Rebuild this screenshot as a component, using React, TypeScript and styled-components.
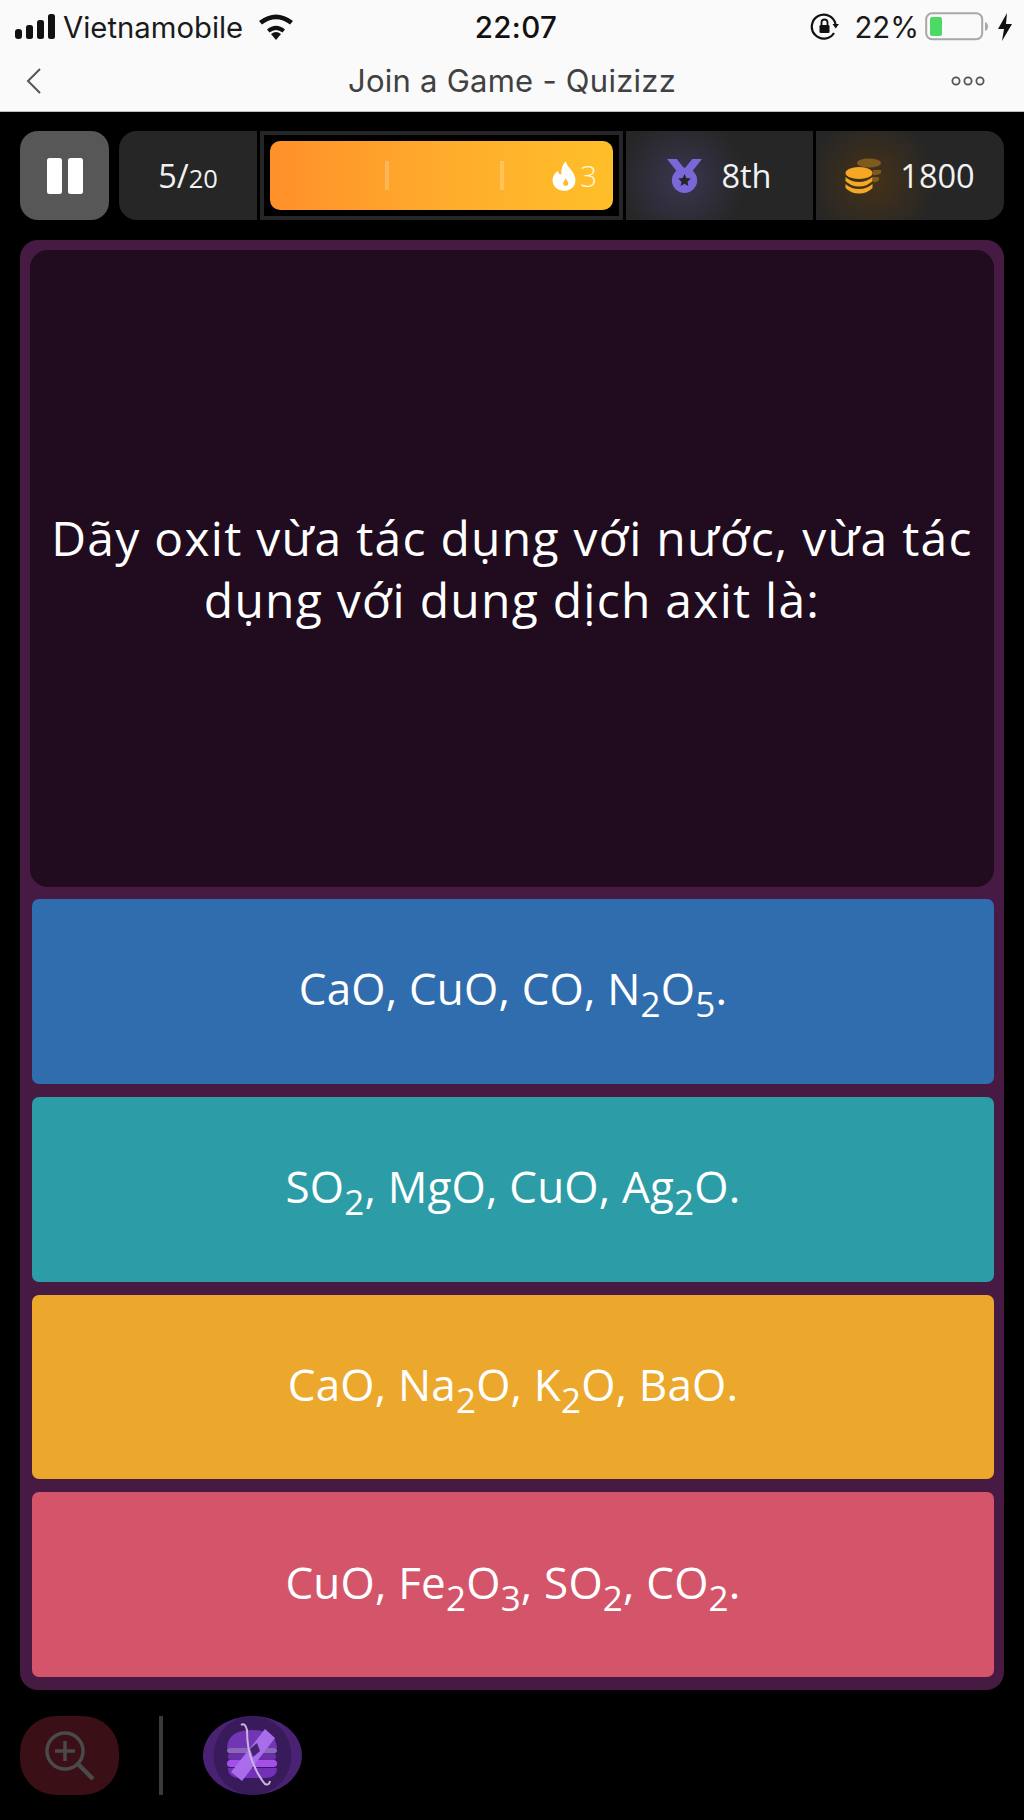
import React from "react";
import styled, { createGlobalStyle } from "styled-components";

const Global = createGlobalStyle`
  html, body { margin: 0; padding: 0; background: #000; }
  * { box-sizing: border-box; }
`;

const Page = styled.div`
  width: 1024px;
  height: 1820px;
  background: #000;
  display: flex;
  flex-direction: column;
  overflow: hidden;
`;

const Browser = styled.header`
  height: 112px;
  background: #fafafa;
  border-bottom: 1px solid #bdbdbd;
  font-family: Inter, "Liberation Sans", sans-serif;
  display: flex;
  flex-direction: column;
`;

const StatusBar = styled.div`
  height: 54px;
  padding: 0 11px 0 15px;
  display: grid;
  grid-template-columns: 1fr auto 1fr;
  align-items: center;
  color: #1a1a1a;
  font-size: 29.3px;
`;

const StatusLeft = styled.div`
  display: flex;
  align-items: center;
  gap: 6px;
`;

const Clock = styled.div`
  margin-left: 4px;
  font-weight: 500;
  font-size: 29.5px;
  letter-spacing: 0.4px;
  color: #111;
`;

const StatusRight = styled.div`
  display: flex;
  align-items: center;
  justify-content: flex-end;
  gap: 6px;
`;

const NavBar = styled.div`
  flex: 1;
  padding: 0 25px 4px;
  display: grid;
  grid-template-columns: 1fr auto 1fr;
  align-items: center;
  color: #414141;
  font-size: 31px;
  letter-spacing: 0.25px;
`;

const NavEnd = styled.div`
  margin-right: 13px;
  display: flex;
  justify-content: flex-end;
`;

const Game = styled.main`
  flex: 1;
  padding: 19px 20px 0;
  display: flex;
  flex-direction: column;
  font-family: "Open Sans", Lato, sans-serif;
`;

const TopBar = styled.div`
  height: 89px;
  display: flex;
  gap: 10px;
`;

const PauseButton = styled.div`
  width: 89px;
  border-radius: 18px;
  background: #575757;
  display: flex;
  align-items: center;
  justify-content: center;
`;

const Stats = styled.div`
  flex: 1;
  display: flex;
  gap: 3px;
  border-radius: 18px;
  overflow: hidden;
`;

const Stat = styled.div<{ $w: number; $glow?: string }>`
  width: ${(p) => p.$w}px;
  background: ${(p) =>
    p.$glow
      ? `radial-gradient(circle at 30% 55%, ${p.$glow} 0%, #262626 46%)`
      : "#262626"};
  display: flex;
  align-items: center;
  justify-content: center;
  gap: 19px;
  color: #f2f2f2;
  font-size: 32.5px;
`;

const Small = styled.small`
  font-size: 25.5px;
`;

const Track = styled.div`
  flex: 1;
  background: #262626;
  padding: 4px;
  display: flex;
`;

const TrackInner = styled.div`
  flex: 1;
  background: #000;
  padding: 6px;
  display: flex;
`;

const Fill = styled.div`
  flex: 1;
  position: relative;
  border-radius: 10px;
  background: linear-gradient(90deg, #ff902a 0%, #ffab2c 50%, #ffbf29 100%);
  display: flex;
  align-items: center;
  justify-content: flex-end;
  gap: 4px;
  padding-right: 16px;
  color: rgba(255, 255, 255, 0.85);
  font-size: 30px;
  font-weight: 300;
`;

const Tick = styled.span<{ $x: number }>`
  position: absolute;
  top: 20px;
  left: ${(p) => p.$x}px;
  width: 4px;
  height: 29px;
  background: rgba(255, 255, 255, 0.22);
`;

const Panel = styled.section`
  margin-top: 20px;
  height: 1450px;
  padding: 10px 10px 13px;
  border-radius: 18px;
  background: #461a42;
  display: flex;
  flex-direction: column;
`;

const Question = styled.div`
  height: 637px;
  margin-bottom: 12px;
  border-radius: 18px;
  background: #200c1e;
  color: #fff;
  display: flex;
  align-items: center;
  justify-content: center;
  text-align: center;
  font-size: 48px;
  letter-spacing: 1.25px;
  line-height: 62px;
  padding: 0 16px;
`;

const Options = styled.div`
  flex: 1;
  margin-left: 2px;
  display: flex;
  flex-direction: column;
  gap: 13px;
`;

const Option = styled.div<{ $bg: string }>`
  flex: 1;
  padding-bottom: 6px;
  border-radius: 7px;
  background: ${(p) => p.$bg};
  color: #fff;
  display: flex;
  align-items: center;
  justify-content: center;
  font-size: 44px;
  letter-spacing: 0.2px;
  line-height: 50px;
  sub {
    font-size: 35px;
    line-height: 0;
    vertical-align: -12px;
  }
`;

const Footer = styled.footer`
  margin-top: 26px;
  display: flex;
  align-items: center;
  height: 79px;
`;

const ZoomButton = styled.div`
  width: 99px;
  height: 79px;
  border-radius: 36px;
  background: #3a0f16;
  display: flex;
  align-items: center;
  justify-content: center;
`;

const Separator = styled.div`
  width: 4px;
  height: 79px;
  margin: 0 40px;
  background: #3a3a3a;
`;

const PowerUp = styled.div`
  width: 99px;
  height: 79px;
  border-radius: 50%;
  background: #4a2273;
  display: flex;
  align-items: center;
  justify-content: center;
`;

const Signal = () => (
  <svg width="42" height="26" viewBox="0 0 42 26">
    <rect x="0" y="15" width="7" height="10" rx="3" fill="#111" />
    <rect x="11" y="11" width="7" height="14" rx="2.5" fill="#111" />
    <rect x="22" y="6" width="7" height="19" rx="2.5" fill="#111" />
    <rect x="33" y="0" width="7" height="25" rx="2.5" fill="#111" />
  </svg>
);

const Wifi = () => (
  <svg width="36" height="26" viewBox="0 0 36 26" style={{ marginLeft: 9 }}>
    <path d="M18 26 L13 20 Q18 16 23 20 Z" fill="#111" />
    <path d="M9 15.5 Q18 8 27 15.5 L24.5 18.5 Q18 13.5 11.5 18.5 Z" fill="#111" />
    <path d="M1 7 Q18 -6 35 7 L32 10.5 Q18 0 4 10.5 Z" fill="#111" />
  </svg>
);

const RotationLock = () => (
  <svg width="30" height="30" viewBox="0 0 30 30" style={{ marginRight: 8 }}>
    <path d="M24 21 A12 12 0 1 1 25.5 12" fill="none" stroke="#111" strokeWidth="2.2" />
    <path d="M22.5 12 H29 L25.7 16.5 Z" fill="#111" />
    <rect x="9.5" y="13" width="10" height="8" rx="1.3" fill="#111" />
    <path d="M11.5 13 V10.5 A3 3 0 0 1 17.5 10.5 V13" fill="none" stroke="#111" strokeWidth="1.8" />
  </svg>
);

const Battery = () => (
  <svg width="66" height="30" viewBox="0 0 66 30">
    <rect x="1.2" y="1.2" width="56" height="26" rx="6" fill="none" stroke="#a8a8a8" strokeWidth="2" />
    <rect x="5" y="5" width="12" height="19" rx="2" fill="#4cd964" />
    <path d="M60 10 Q63 11 63 14.5 Q63 18 60 19 Z" fill="#a8a8a8" />
  </svg>
);

const Bolt = () => (
  <svg width="16" height="28" viewBox="0 0 16 28">
    <path d="M10 0 L1 16 H7 L5 28 L15 11 H9 Z" fill="#111" />
  </svg>
);

const Back = () => (
  <svg width="18" height="28" viewBox="0 0 18 28">
    <path d="M15 2 L3 14 L15 26" fill="none" stroke="#555" strokeWidth="2" />
  </svg>
);

const Dots = () => (
  <svg width="36" height="12" viewBox="0 0 36 12">
    <circle cx="6" cy="6" r="3.6" fill="none" stroke="#555" strokeWidth="1.8" />
    <circle cx="18" cy="6" r="3.6" fill="none" stroke="#555" strokeWidth="1.8" />
    <circle cx="30" cy="6" r="3.6" fill="none" stroke="#555" strokeWidth="1.8" />
  </svg>
);

const Pause = () => (
  <svg width="36" height="36" viewBox="0 0 36 36">
    <rect x="0" y="0" width="15" height="36" rx="2.5" fill="#fff" />
    <rect x="21" y="0" width="15" height="36" rx="2.5" fill="#fff" />
  </svg>
);

const Flame = () => (
  <svg width="24" height="30" viewBox="0 0 21 26">
    <path
      fillRule="evenodd"
      d="M12 0 C13 5 20 9 20.5 16 C21 22 16 26 10.5 26 C5 26 0.5 22 0.5 17 C0.5 13 3 10.5 5 8.5 C5.5 10.5 6.5 11.5 8 12 C8 7 9 3 12 0 Z M12 15 C11.2 17 9.8 18 9.8 19.6 C9.8 20.9 10.8 21.6 12 21.6 C13.2 21.6 14.2 20.9 14.2 19.6 C14.2 18 12.8 17 12 15 Z"
      fill="#fff"
    />
  </svg>
);

const Medal = () => (
  <svg width="35" height="35" viewBox="0 0 36 36">
    <path d="M0 1 H10 L18 11 L26 1 H36 L25 15 H11 Z" fill="#7a68d8" />
    <circle cx="18" cy="23" r="13" fill="#7a68d8" />
    <path d="M18 16.5 L19.9 20.6 L24.5 21.2 L21.1 24.3 L22 28.8 L18 26.5 L14 28.8 L14.9 24.3 L11.5 21.2 L16.1 20.6 Z" fill="#262626" />
  </svg>
);

const Coins = () => (
  <svg width="36" height="36" viewBox="0 0 36 36">
    <g fill="#7f5a1e">
      <ellipse cx="24" cy="5" rx="12" ry="4.5" />
      <path d="M28 12 H36 V15 Q34 17 28 17 Z" />
      <path d="M28 19 H34 V22 Q33 24 28 24 Z" />
    </g>
    <g fill="#f7a823">
      <ellipse cx="14" cy="15" rx="13.5" ry="6" />
      <path d="M0.5 19 Q6 24 14 24 Q22 24 27.5 19 V23 Q22 28.5 14 28.5 Q6 28.5 0.5 23 Z" />
      <path d="M0.5 26 Q6 31 14 31 Q22 31 27.5 26 V30 Q22 35.5 14 35.5 Q6 35.5 0.5 30 Z" />
    </g>
  </svg>
);

const ZoomIcon = () => (
  <svg width="50" height="50" viewBox="0 0 50 50">
    <g fill="none" stroke="#4a4a4a" strokeWidth="3.5">
      <circle cx="20" cy="20" r="18" />
      <path d="M20 10 V30 M10 20 H30" />
      <path d="M32.5 32.5 L48 48" strokeWidth="4.5" />
    </g>
  </svg>
);

const PowerIcon = () => (
  <svg width="99" height="79" viewBox="0 0 99 79">
    <ellipse cx="49.5" cy="39.5" rx="39" ry="39.5" fill="#391b5c" />
    <path d="M24 32 Q25 14 49 14 Q73 14 74 32 Z" fill="#7236b4" />
    <rect x="24" y="32" width="50" height="5" rx="2.5" fill="#8a68b8" />
    <rect x="25" y="37" width="48" height="7" rx="3" fill="#6a2fa8" />
    <rect x="24" y="44" width="50" height="7" rx="3.5" fill="#a44fe8" />
    <path d="M25 52 H74 Q74 62 62 62 H37 Q25 62 25 52 Z" fill="#7430b8" />
    <path d="M28 56 L62 13 L72 22 L39 65 Z" fill="#a96cea" />
    <path d="M47 33 L54 27 L57 35 L50 41 Z" fill="#47236f" />
    <path d="M38 9 Q42 6 44 14 Q44 34 50 47 Q55 60 62 68 Q66 70 67 65" fill="none" stroke="#c9b4e4" strokeWidth="2" />
  </svg>
);

const options: { bg: string; text: React.ReactNode }[] = [
  { bg: "#2f6dae", text: <>CaO, CuO, CO, N<sub>2</sub>O<sub>5</sub>.</> },
  { bg: "#2c9ca6", text: <>SO<sub>2</sub>, MgO, CuO, Ag<sub>2</sub>O.</> },
  { bg: "#eca82c", text: <>CaO, Na<sub>2</sub>O, K<sub>2</sub>O, BaO.</> },
  { bg: "#d4546a", text: <>CuO, Fe<sub>2</sub>O<sub>3</sub>, SO<sub>2</sub>, CO<sub>2</sub>.</> },
];

export default function App() {
  return (
    <Page>
      <Global />
      <Browser>
        <StatusBar>
          <StatusLeft>
            <Signal />
            <span>Vietnamobile</span>
            <Wifi />
          </StatusLeft>
          <Clock>22:07</Clock>
          <StatusRight>
            <RotationLock />
            <span>22%</span>
            <Battery />
            <Bolt />
          </StatusRight>
        </StatusBar>
        <NavBar>
          <Back />
          <span>Join a Game - Quizizz</span>
          <NavEnd>
            <Dots />
          </NavEnd>
        </NavBar>
      </Browser>
      <Game>
        <TopBar>
          <PauseButton>
            <Pause />
          </PauseButton>
          <Stats>
            <Stat $w={138}>
              <span>
                5/<Small>20</Small>
              </span>
            </Stat>
            <Track>
              <TrackInner>
                <Fill>
                  <Tick $x={115} />
                  <Tick $x={230} />
                  <Flame />
                  <span>3</span>
                </Fill>
              </TrackInner>
            </Track>
            <Stat $w={187} $glow="#3a3650">
              <Medal />
              <span>8th</span>
            </Stat>
            <Stat $w={188} $glow="#453218">
              <Coins />
              <span>1800</span>
            </Stat>
          </Stats>
        </TopBar>
        <Panel>
          <Question>
            Dãy oxit vừa tác dụng với nước, vừa tác dụng với dung dịch axit là:
          </Question>
          <Options>
            {options.map((o) => (
              <Option key={o.bg} $bg={o.bg}>
                <span>{o.text}</span>
              </Option>
            ))}
          </Options>
        </Panel>
        <Footer>
          <ZoomButton>
            <ZoomIcon />
          </ZoomButton>
          <Separator />
          <PowerUp>
            <PowerIcon />
          </PowerUp>
        </Footer>
      </Game>
    </Page>
  );
}
